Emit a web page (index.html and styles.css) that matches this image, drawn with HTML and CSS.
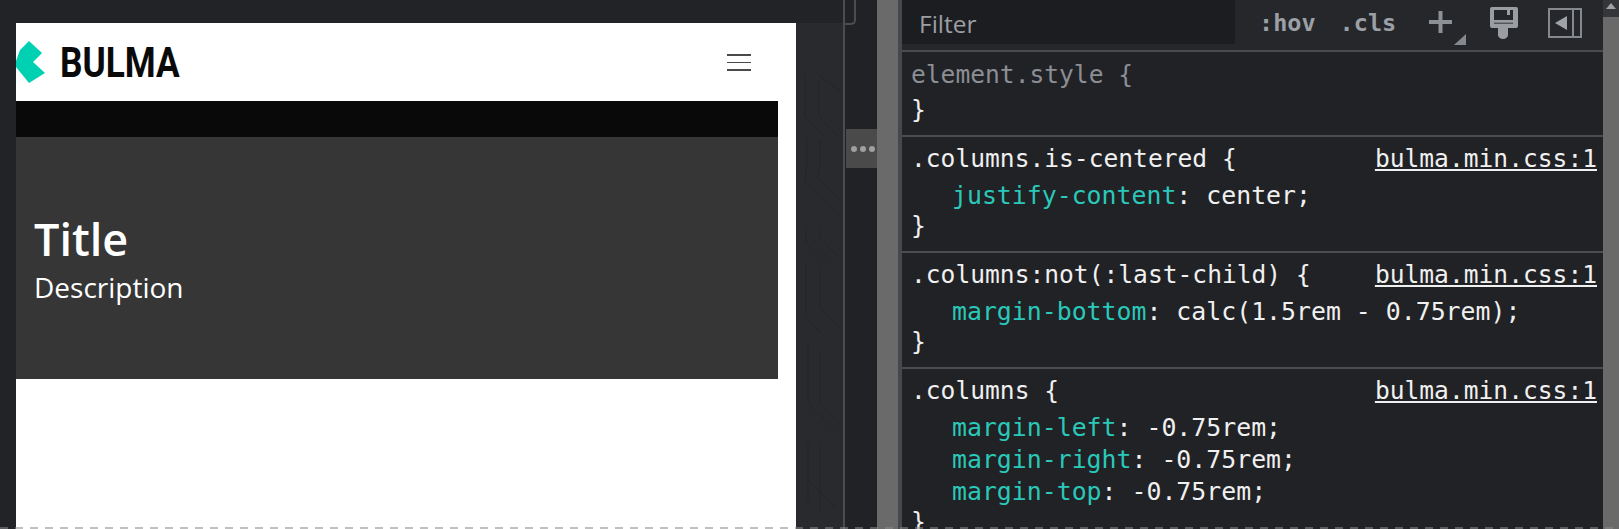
FILE: index.html
```html
<!DOCTYPE html>
<html lang="en">
<head>
<meta charset="utf-8">
<title>Bulma columns inspector</title>
<link rel="stylesheet" href="styles.css">
</head>
<body>
<div class="page-area">
  <div class="viewport">
    <nav class="navbar">
      <svg class="logo-mark" width="30" height="44" viewBox="0 0 30 44"><polygon points="13,0 26,12 17,21 29,32 13,42 0,26 0,20 4,9" fill="#00d1b2"/></svg>
      <span class="logo-text">BULMA</span>
      <span class="burger"><i class="bar-thick"></i><i class="bar-thin"></i><i class="bar-thick"></i></span>
    </nav>
    <div class="hero-wrap">
      <div class="hero-strip"></div>
      <div class="hero-body">
        <h1 class="title">Title</h1>
        <p class="subtitle">Description</p>
      </div>
    </div>
  </div>
  <div class="page-side">
    <svg class="circuit" width="47" height="506" viewBox="0 0 47 506" fill="none" stroke="#222327" stroke-dasharray="3 1"><path d="M9 52v42l19 19M23 59v35l21 21M23 52l22 17M11 115v27l-2 17 36 36M24 118v25l-2 12 23 23M10 205v15l20 20M24 205v10l18 18M10 240v55l15 15M24 245v40l18 18M12 320v60l30 30M24 330v50l20 20M12 420v60M24 420v70M10 455l30 30"/></svg>
  </div>
</div>
<div class="gutter">
  <span class="gutter-tab"></span>
  <div class="handle"><b></b><b></b><b></b></div>
</div>
<div class="split-bar"></div>
<div class="inspector">
  <div class="toolbar">
    <div class="filter">Filter</div>
    <span class="pseudo pseudo-hov">:hov</span>
    <span class="pseudo pseudo-cls">.cls</span>
    <svg class="tool-plus" width="40" height="38" viewBox="0 0 40 38"><path d="M2 12h23M13.5 1v22" stroke="#8d9095" stroke-width="4"/><polygon points="27,35 39,35 39,24" fill="#85888d"/></svg>
    <svg class="tool-brush" width="32" height="34" viewBox="0 0 32 34"><path d="M2 4a2 2 0 0 1 2-2h24a2 2 0 0 1 2 2v17a2 2 0 0 1-2 2H4a2 2 0 0 1-2-2z" fill="#9a9da2"/><path d="M6 5h13v5h3V5h3v10H6z" fill="#26272b"/><path d="M6 17.5h19v1.5H6z" fill="#54565a"/><path d="M10 23h10v7a5 4 0 0 1-10 0z" fill="#9a9da2"/></svg>
    <svg class="tool-panel" width="34" height="30" viewBox="0 0 34 30" fill="none"><rect x="1" y="1" width="32" height="28" stroke="#85888d" stroke-width="2"/><path d="M25 1v28" stroke="#85888d" stroke-width="2"/><polygon points="7,15 19,8 19,22" fill="#a0a3a8"/></svg>
  </div>
  <section class="rule">
    <div class="sel muted">element.style {</div>
    <div class="close first-close">}</div>
  </section>
  <section class="rule">
    <div class="sel"><span>.columns.is-centered {</span><a class="src">bulma.min.css:1</a></div>
    <div class="decl"><span class="prop">justify-content</span>: center;</div>
    <div class="close">}</div>
  </section>
  <section class="rule">
    <div class="sel"><span>.columns:not(:last-child) {</span><a class="src">bulma.min.css:1</a></div>
    <div class="decl"><span class="prop">margin-bottom</span>: calc(1.5rem - 0.75rem);</div>
    <div class="close">}</div>
  </section>
  <section class="rule">
    <div class="sel"><span>.columns {</span><a class="src">bulma.min.css:1</a></div>
    <div class="decl"><span class="prop">margin-left</span>: -0.75rem;</div>
    <div class="decl tight"><span class="prop">margin-right</span>: -0.75rem;</div>
    <div class="decl tight"><span class="prop">margin-top</span>: -0.75rem;</div>
    <div class="close">}</div>
  </section>
</div>
<div class="scrollbar"><div class="scroll-btn"><svg class="scroll-arrow" width="10" height="6" viewBox="0 0 10 6"><polygon points="5,0 10,6 0,6" fill="#a0a0a0"/></svg></div></div>
<div class="dash-line"></div>
</body>
</html>
```
FILE: styles.css
```css
* { box-sizing: border-box; }
html, body { margin: 0; height: 529px; }
body {
  position: relative;
  display: flex;
  width: 1619px;
  overflow: hidden;
  background: #212226;
  font-family: "Open Sans", sans-serif;
}
.page-area {
  display: flex;
  flex: 0 0 843px;
  height: 529px;
  padding: 23px 0 0 16px;
  background: #222326;
}
.viewport { flex: 0 0 780px; height: 506px; background: #fff; }
.page-side { flex: 1; overflow: hidden; background: #292a2e; }
.circuit { display: block; }
.navbar { display: flex; align-items: center; height: 78px; }
.logo-mark { flex: none; margin-top: 1px; }
.logo-text {
  display: inline-block;
  width: 124px;
  margin-left: 14px;
  font: 700 43px/1 Roboto, sans-serif;
  color: #0a0a0a;
  transform: scaleX(.82);
  transform-origin: left center;
}
.burger {
  display: flex;
  flex-direction: column;
  gap: 6px;
  width: 24px;
  margin-left: auto;
  margin-right: 45px;
}
.bar-thick { height: 2px; background: #4a4a4a; }
.bar-thin { height: 1px; background: #4a4a4a; }
.hero-wrap { width: 762px; }
.hero-strip { height: 36px; background: #090909; }
.hero-body {
  display: flex;
  flex-direction: column;
  justify-content: center;
  height: 242px;
  padding: 0 0 0 18px;
  background: #363636;
  color: #fff;
}
.title { margin: -3px 0 0; font-size: 45px; line-height: 60px; font-weight: 600; }
.subtitle { margin: 0; font-size: 28px; line-height: 36px; }
.gutter { position: relative; flex: 0 0 34px; border-left: 2px solid #4b4c50; }
.gutter-tab {
  display: block;
  width: 11px;
  height: 25px;
  border: 2px solid #4b4c50;
  border-left: 0;
  border-top: 0;
  border-radius: 0 0 5px 0;
}
.handle {
  position: absolute;
  top: 129px;
  left: 1px;
  display: flex;
  align-items: center;
  gap: 3px;
  width: 31px;
  height: 39px;
  padding-left: 5px;
  background: #4a4a4a;
}
.handle b { flex: none; width: 6px; height: 6px; border-radius: 50%; background: #a0a0a0; }
.split-bar { flex: 0 0 25px; border-left: 21px solid #6a6a6a; border-right: 4px solid #47484c; }
.inspector {
  flex: 0 0 701px;
  font: 24.6px "DejaVu Sans Mono", monospace;
  color: #f0f0f0;
}
.toolbar {
  position: relative;
  height: 52px;
  border-bottom: 2px solid #4b4c50;
  color: #9aa0a6;
  display: flex;
  align-items: flex-start;
  background: #26272b;
}
.filter {
  flex: 0 0 333px;
  height: 44px;
  padding-left: 17px;
  background: #1c1d20;
  font: 24.5px/47px "Open Sans", sans-serif;
  color: #9b9ea3;
}
.pseudo { font: bold 23.5px/46px "DejaVu Sans Mono", monospace; color: #9aa0a6; }
.pseudo-hov { margin-left: 24px; }
.pseudo-cls { margin-left: 24px; }
.tool-plus { margin: 10px 0 0 31px; flex: none; }
.tool-brush { margin: 5px 0 0 21px; flex: none; }
.tool-panel { margin: 8px 0 0 28px; flex: none; }
.rule { border-bottom: 2px solid #4b4c50; padding: 3px 6px 11px 9px; }
.rule:last-child { border-bottom: 0; }
.sel { display: flex; justify-content: space-between; height: 36px; line-height: 38px; }
.muted { color: #8b8e94; line-height: 40px; }
.src { text-decoration: underline; color: #f0f0f0; }
.decl { margin-top: 4px; padding-left: 41px; height: 32px; line-height: 32px; font-size: 24.85px; }
.tight { margin-top: 0; }
.prop { color: #2ac8b9; }
.close { height: 28px; line-height: 28px; }
.first-close { margin-top: 5px; }
.scrollbar {
  position: absolute;
  top: 0;
  right: 0;
  width: 16px;
  height: 529px;
  background: #6a6a6a;
}
.scroll-btn {
  display: flex;
  justify-content: center;
  align-items: flex-start;
  height: 17px;
  padding-top: 3px;
  background: #35363a;
}
.scroll-arrow { display: block; }
.dash-line {
  position: absolute;
  left: 0;
  right: 0;
  bottom: 0;
  height: 2px;
  background: repeating-linear-gradient(90deg, rgba(140,140,140,.55) 0 8px, transparent 8px 15px);
}
```
